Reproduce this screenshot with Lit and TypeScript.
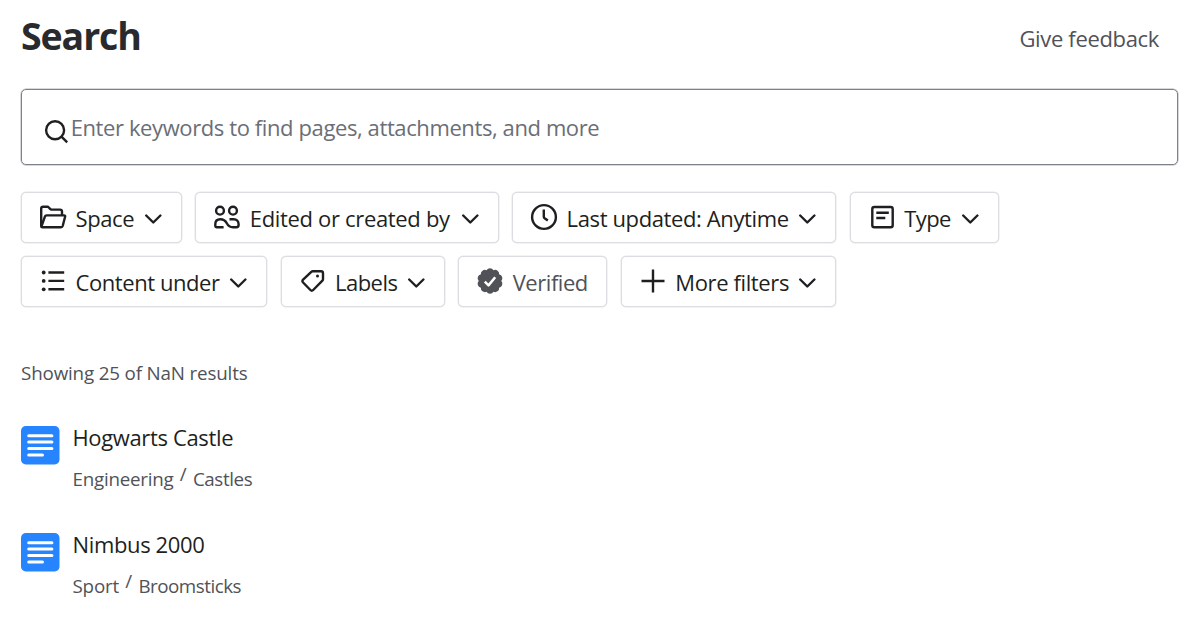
import { LitElement, html, svg, css, nothing } from "lit";
import { customElement, property } from "lit/decorators.js";
import { styleMap } from "lit/directives/style-map.js";

interface Filter {
  icon: string;
  label: string;
  width: number;
  tracking: number;
  toggle?: boolean;
}

interface Crumb {
  text: string;
  tracking: number;
}

interface Result {
  title: string;
  tracking: number;
  path: Crumb[];
}

const FILTER_ROWS: Filter[][] = [
  [
    { icon: "folder", label: "Space", width: 161, tracking: -0.4 },
    { icon: "people", label: "Edited or created by", width: 303.5, tracking: -0.33 },
    { icon: "clock", label: "Last updated: Anytime", width: 324.3, tracking: -0.38 },
    { icon: "page", label: "Type", width: 149.2, tracking: -0.6 },
  ],
  [
    { icon: "list", label: "Content under", width: 246.3, tracking: -0.43 },
    { icon: "tag", label: "Labels", width: 164.3, tracking: -0.55 },
    { icon: "verified", label: "Verified", width: 149.3, tracking: -0.45, toggle: true },
    { icon: "plus", label: "More filters", width: 215.4, tracking: -0.38 },
  ],
];

const RESULTS: Result[] = [
  {
    title: "Hogwarts Castle",
    tracking: -0.36,
    path: [
      { text: "Engineering", tracking: -0.25 },
      { text: "Castles", tracking: -0.4 },
    ],
  },
  {
    title: "Nimbus 2000",
    tracking: -0.36,
    path: [
      { text: "Sport", tracking: -0.2 },
      { text: "Broomsticks", tracking: -0.5 },
    ],
  },
];

// Badge outline with evenly spaced rounded lobes.
const badge = (() => {
  const lobes = 10;
  const pt = (r: number, a: number) =>
    `${(16 + r * Math.sin(a)).toFixed(2)} ${(16 - r * Math.cos(a)).toFixed(2)}`;
  const step = (2 * Math.PI) / lobes;
  let d = `M${pt(11.3, -step / 2)}`;
  for (let i = 0; i < lobes; i++) d += `A4 4 0 0 1 ${pt(11.3, (i + 0.5) * step)}`;
  return d + "Z";
})();

const ICONS: Record<string, unknown> = {
  folder: svg`<path d="M4.2 25V7.6Q4.2 5.8 6 5.8h4.4q.8 0 1.4.7l1.3 1.4q.6.7 1.5.7H23q2 0 2 2v3.6"/><path d="M4.4 25.5 7.9 15.6q.4-1.2 1.6-1.2H27q1.5 0 1.1 1.4l-2.4 9.2q-.4 1.3-1.7 1.3H5.5q-1.3 0-1.3-1.3"/>`,
  people: svg`<circle cx="9" cy="9.7" r="3.9"/><circle cx="22" cy="9.7" r="3.9"/><path d="M12.6 26.3H5.5q-1.2 0-1.2-1.2v-2C4.3 20 6.4 18.3 9.3 18.3c3.7 0 5.3 1.7 6.5 4 1.3 2.5 3 4 6.2 4h3.4q2.2 0 2.2-2.2v-.9c0-3-2-4.9-4.8-4.9h-4.3"/>`,
  clock: svg`<circle cx="16" cy="16" r="11.9"/><path d="M15.8 8.5v7.3q0 .9.8 1.4l3.2 2.3"/>`,
  page: svg`<rect x="6.3" y="6" width="20.4" height="20.2" rx="2"/><path d="M10.3 11.7h12.5M10.3 17h9"/>`,
  list: svg`<g fill="currentColor" stroke="none"><circle cx="6.7" cy="7.5" r="1.9"/><circle cx="6.7" cy="15.9" r="1.9"/><circle cx="6.7" cy="24.3" r="1.9"/></g><path d="M11.4 7.5H27.2M11.4 15.9H27.2M11.4 24.3H27.2"/>`,
  tag: svg`<path d="M6.1 14.7l8.2-7.9q.7-.6 1.6-.6H24q2 0 2 2v6q0 .9-.6 1.5l-9.2 9.3q-1.4 1.4-2.8 0l-7.3-7.5q-1.4-1.4 0-2.8z"/><circle cx="20.5" cy="10.9" r="1.5" fill="currentColor" stroke="none"/>`,
  verified: svg`<path d="${badge}" fill="currentColor" stroke="none"/><path d="M10.8 16.7l3.7 3.7 6.7-8.2" stroke="#fff" stroke-width="2.5"/>`,
  plus: svg`<path d="M16 4.5v23M4.5 16h23"/>`,
};

@customElement("filter-chip")
export class FilterChip extends LitElement {
  @property({ attribute: false }) filter!: Filter;

  static styles = css`
    :host {
      display: block;
    }
    .chip {
      display: flex;
      align-items: center;
      box-sizing: border-box;
      width: 100%;
      height: 51px;
      padding: 0 19px 0 15px;
      border: 1px solid #dcdde0;
      border-radius: 5px;
      box-shadow: 0 0 0 0.5px rgba(220, 221, 224, 0.7);
      background: #fff;
      color: #1e1f21;
      font: 400 22px/30px "Open Sans", "Noto Sans", sans-serif;
      white-space: nowrap;
    }
    .toggle {
      color: #505258;
    }
    .icon {
      flex: none;
      width: 32px;
      height: 32px;
      margin-top: -0.5px;
      fill: none;
      stroke: currentColor;
      stroke-width: 2.4;
      stroke-linejoin: round;
    }
    .label {
      flex: 1;
      padding-left: 6.5px;
      text-align: left;
    }
    .chevron {
      flex: none;
      width: 18px;
      height: 12px;
      margin-top: 2px;
      fill: none;
      stroke: currentColor;
      stroke-width: 2.4;
    }
  `;

  render() {
    const f = this.filter;
    return html`<button class="chip ${f.toggle ? "toggle" : ""}">
      <svg class="icon" viewBox="0 0 32 32">${ICONS[f.icon]}</svg>
      <span class="label" style=${styleMap({ letterSpacing: `${f.tracking}px` })}>${f.label}</span>
      ${f.toggle
        ? nothing
        : html`<svg class="chevron" viewBox="0 0 18 12"><path d="M2.2 2.5 9.300 9.500l7.100-7" stroke-linecap="round" stroke-linejoin="round"/></svg>`}
    </button>`;
  }
}

@customElement("result-item")
export class ResultItem extends LitElement {
  @property({ attribute: false }) result!: Result;

  static styles = css`
    :host {
      display: flex;
      gap: 13px;
      height: 107px;
    }
    .icon {
      flex: none;
      width: 38.5px;
      height: 38.5px;
      margin-top: 6px;
    }
    .title {
      font-size: 22px;
      line-height: 34px;
      color: #1e1f21;
    }
    .path {
      display: flex;
      gap: 6.3px;
      margin-top: 7px;
      font-size: 18.8px;
      line-height: 36px;
      color: #505258;
    }
    .slash {
      margin-top: -5px;
    }
  `;

  render() {
    const r = this.result;
    return html`<svg class="icon" viewBox="0 0 38.5 38.5">
        <rect width="38.5" height="38.5" rx="4.8" fill="#2684ff" />
        <path d="M7.7 9.7h23.2M7.7 16.1h23.2M7.7 22.6h23.2M7.7 29h13.8" stroke="#fff" stroke-width="3" stroke-linecap="round" />
      </svg>
      <div class="text">
        <div class="title" style=${styleMap({ letterSpacing: `${r.tracking}px` })}>${r.title}</div>
        <div class="path">
          ${r.path.map(
            (c, i) => html`${i ? html`<span class="slash">/</span>` : nothing}<span
                style=${styleMap({ letterSpacing: `${c.tracking}px` })}
                >${c.text}</span
              >`
          )}
        </div>
      </div>`;
  }
}

@customElement("app-root")
export class AppRoot extends LitElement {
  static styles = css`
    :host {
      display: block;
      box-sizing: border-box;
      height: 619px;
      overflow: hidden;
      padding: 10px 22px 0 21px;
      background: #fff;
      font-family: "Open Sans", "Noto Sans", sans-serif;
    }
    .header {
      display: flex;
      justify-content: space-between;
      height: 79px;
    }
    .heading {
      margin: 0;
      font-size: 37.5px;
      line-height: 52px;
      font-weight: 700;
      letter-spacing: -1.1px;
      color: #292a2e;
    }
    .feedback {
      margin: 12px 19px 0 0;
      font-size: 22px;
      line-height: 32px;
      letter-spacing: -0.34px;
      color: #505258;
    }
    .search {
      display: flex;
      align-items: center;
      box-sizing: border-box;
      height: 76px;
      padding-left: 22px;
      border: 1px solid #7d818a;
      border-radius: 5px;
      box-shadow: 0 0 0 0.5px rgba(125, 129, 138, 0.6);
    }
    .glass {
      width: 26px;
      height: 26px;
      margin-top: 10px;
      fill: none;
      stroke: #1e1f21;
      stroke-width: 2.4;
    }
    .placeholder {
      margin-bottom: 1px;
      padding-left: 0.7px;
      font-size: 22px;
      line-height: 30px;
      letter-spacing: -0.395px;
      color: #6b6e76;
    }
    .filters {
      display: grid;
      gap: 13px;
      margin-top: 27px;
    }
    .row {
      display: flex;
      gap: 13.3px;
    }
    .summary {
      margin-top: 51px;
      font-size: 18.8px;
      line-height: 30px;
      letter-spacing: -0.16px;
      color: #505258;
    }
    .results {
      margin-top: 32px;
    }
  `;

  render() {
    return html`
      <div class="header">
        <h1 class="heading">Search</h1>
        <div class="feedback">Give feedback</div>
      </div>
      <div class="search">
        <svg class="glass" viewBox="0 0 26 26"><circle cx="11.1" cy="11.3" r="9" /><path d="M17.5 17.7l5.700 5.600" /></svg>
        <span class="placeholder">Enter keywords to find pages, attachments, and more</span>
      </div>
      <div class="filters">
        ${FILTER_ROWS.map(
          (row) => html`<div class="row">
            ${row.map((f) => html`<filter-chip .filter=${f} style=${styleMap({ width: `${f.width}px` })}></filter-chip>`)}
          </div>`
        )}
      </div>
      <div class="summary">Showing 25 of NaN results</div>
      <div class="results">${RESULTS.map((r) => html`<result-item .result=${r}></result-item>`)}</div>
    `;
  }
}
